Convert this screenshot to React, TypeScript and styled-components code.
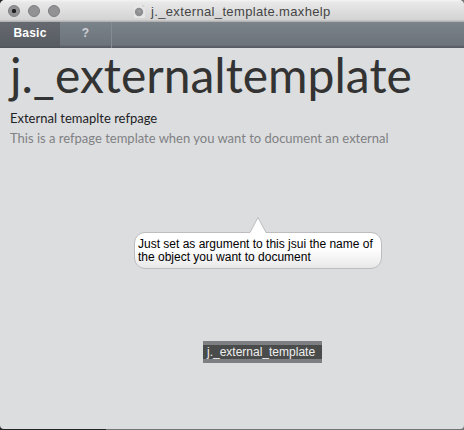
import React from "react";
import styled, { createGlobalStyle } from "styled-components";

const GlobalStyle = createGlobalStyle`
  * { box-sizing: border-box; }
  html, body { margin: 0; padding: 0; overflow: hidden; }
  body { background: linear-gradient(to right, #252529 0 106px, #747476 106px); }
`;

const Desktop = styled.div`
  width: 464px;
  height: 430px;
  padding-bottom: 1px;
`;

const Window = styled.div`
  display: flex;
  flex-direction: column;
  height: 429px;
  background: #dcdddf;
  border-radius: 5px 5px 4px 4px;
  overflow: hidden;
`;

const TitleBar = styled.header`
  display: flex;
  align-items: center;
  flex: none;
  height: 22px;
  padding-left: 8px;
  background: linear-gradient(#f4f4f4 0, #e9e9e9 2px, #d3d3d3 20px, #b4b4b4 21px);
`;

const Lights = styled.div`
  display: flex;
  gap: 8px;
  width: 126px;
`;

const Light = styled.span<{ $edited?: boolean }>`
  width: 12px;
  height: 12px;
  border: 1px solid #7e7e81;
  border-radius: 50%;
  background: ${(p) =>
    p.$edited ? "radial-gradient(circle, #202022 0 1.8px, #919194 2.5px)" : "#929295"};
`;

const FileIcon = styled.svg`
  flex: none;
  width: 12px;
  height: 15px;
`;

const Title = styled.span`
  margin-left: 5px;
  padding-top: 2px;
  font: 13px/20px "Liberation Sans", Arial, sans-serif;
  letter-spacing: 0.35px;
  color: #454545;
  white-space: nowrap;
`;

const TabBar = styled.nav`
  display: flex;
  flex: none;
  height: 26px;
  background: linear-gradient(#7c838a 0, #798188 3px, #6c737a 23px, #565b64 25px);
`;

const Tab = styled.div<{ $active?: boolean }>`
  width: ${(p) => (p.$active ? 60 : 52)}px;
  padding-top: 2px;
  font: bold 12px/19px "Liberation Sans", Arial, sans-serif;
  letter-spacing: ${(p) => (p.$active ? "0.2px" : "0")};
  text-align: center;
  color: ${(p) => (p.$active ? "#fff" : "#cdd0d8")};
  background: ${(p) => (p.$active ? "linear-gradient(#666a70, #575c62 24px, #4b5057)" : "none")};
  border-right: ${(p) => (p.$active ? "none" : "1px solid #858b93")};
`;

const Patcher = styled.main`
  display: flex;
  flex-direction: column;
  flex: 1;
  font-family: Lato, sans-serif;
`;

const Heading = styled.h1`
  margin: 0 0 0 10px;
  height: 60px;
  font-size: 48px;
  line-height: 54px;
  font-weight: 400;
  color: #333;
  white-space: nowrap;
`;

const Line = styled.p<{ $muted?: boolean }>`
  margin: 0 0 0 10px;
  font-size: 13px;
  line-height: 20px;
  color: ${(p) => (p.$muted ? "#808183" : "#222324")};
  white-space: nowrap;
`;

const Bubble = styled.div`
  position: relative;
  width: 248px;
  height: 37px;
  margin: 84px 0 0 133.5px;
  padding: 5px 3px 0 3.5px;
  border: 1px solid #bdbdbf;
  border-radius: 11px;
  background: linear-gradient(#fff 45%, #e8e8e9);
  font: 12px/13px "Liberation Sans", Arial, sans-serif;
  color: #000;
  white-space: nowrap;
`;

const Pointer = styled.svg`
  position: absolute;
  left: 114px;
  top: -17px;
  width: 18px;
  height: 18px;
`;

const ObjectBox = styled.div`
  width: 119px;
  height: 22px;
  margin: 72px 0 0 203px;
  padding-left: 4px;
  border: solid #7d7f83;
  border-width: 4px 0;
  background: #4a4c4b;
  font: 12px/14px "Liberation Sans", Arial, sans-serif;
  color: #f0f0f0;
  white-space: nowrap;
`;

export default function App() {
  return (
    <Desktop>
      <GlobalStyle />
      <Window>
        <TitleBar>
          <Lights>
            <Light $edited />
            <Light />
            <Light />
          </Lights>
          <FileIcon viewBox="0 0 12 15">
            <path d="M0 0h8l3 3v11H0z" fill="#e6e6e6" />
            <path d="M8 0v3h3" fill="#d2d2d2" />
            <circle cx="5" cy="8" r="4.2" fill="#8d8e90" />
            <path d="M3.7 7h2.6v1L5 9.2" fill="none" stroke="#a8a8aa" />
          </FileIcon>
          <Title>j._external_template.maxhelp</Title>
        </TitleBar>
        <TabBar>
          <Tab $active>Basic</Tab>
          <Tab>?</Tab>
        </TabBar>
        <Patcher>
          <Heading>j._externaltemplate</Heading>
          <Line>External temaplte refpage</Line>
          <Line $muted>This is a refpage template when you want to document an external</Line>
          <Bubble>
            <Pointer viewBox="0 0 18 18">
              <path d="M1 16.5 9 1.5 17 16.5V18H1z" fill="#fff" />
              <path d="M0 16.5h1L9 1.5 17 16.5h1" fill="none" stroke="#bdbdbf" />
            </Pointer>
            <div>Just set as argument to this jsui the name of</div>
            <div>the object you want to document</div>
          </Bubble>
          <ObjectBox>j._external_template</ObjectBox>
        </Patcher>
      </Window>
    </Desktop>
  );
}
